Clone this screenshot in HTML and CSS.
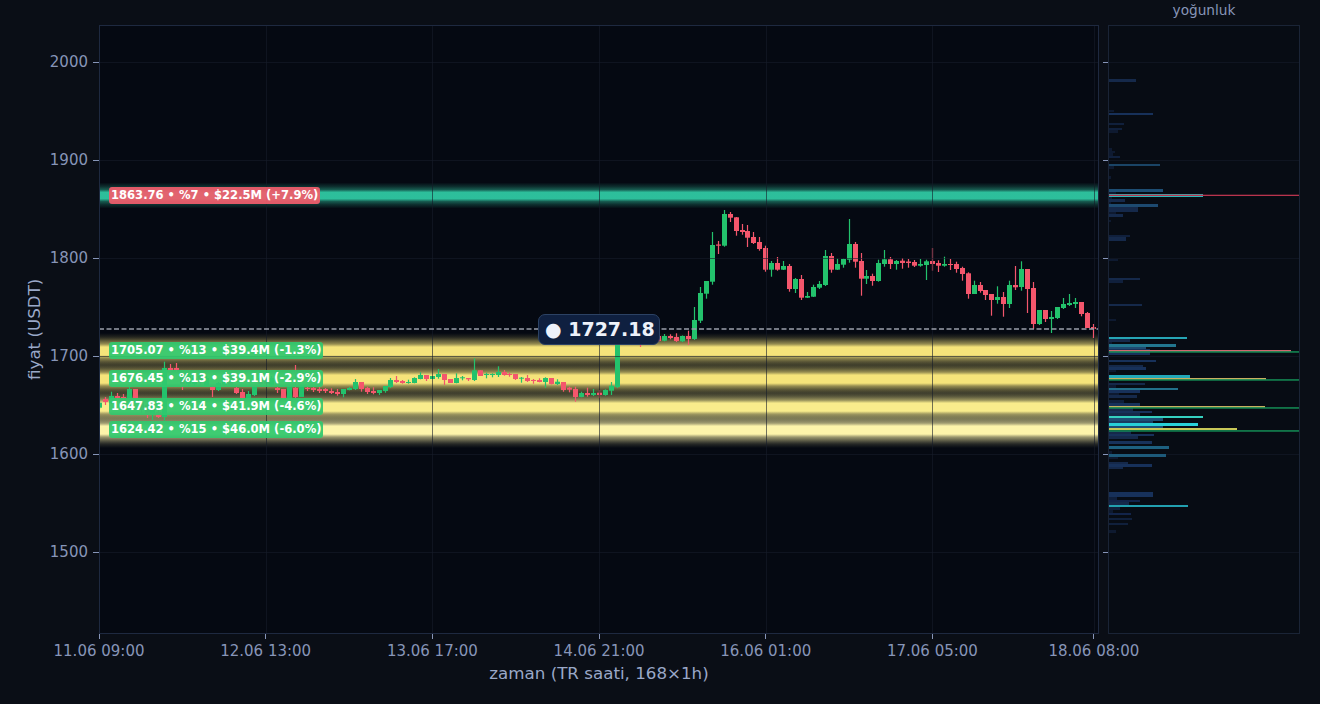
FILE: index.html
```html
<!DOCTYPE html>
<html>
<head>
    <title>Fiyat ve yoğunluk</title>
    <link rel="stylesheet" href="styles.css">
</head>
<body>
    <div class="page">
        <div class="hist-title">yoğunluk</div>

        <div class="y-axis">
            <div class="y-title">fiyat (USDT)</div>
            <div class="y-ticks">
                <div class="y-tick"><span>2000</span><i></i></div>
                <div class="y-tick"><span>1900</span><i></i></div>
                <div class="y-tick"><span>1800</span><i></i></div>
                <div class="y-tick"><span>1700</span><i></i></div>
                <div class="y-tick"><span>1600</span><i></i></div>
                <div class="y-tick"><span>1500</span><i></i></div>
            </div>
        </div>

        <div class="plot" id="plot">
            <svg id="plotSvg" viewBox="99 25 1000 609" width="1000" height="609"></svg>
            <div class="price-tag">● 1727.18</div>
        </div>

        <div class="y-ticks hist-ticks">
            <div class="y-tick"><i></i></div>
            <div class="y-tick"><i></i></div>
            <div class="y-tick"><i></i></div>
            <div class="y-tick"><i></i></div>
            <div class="y-tick"><i></i></div>
            <div class="y-tick"><i></i></div>
        </div>

        <div class="hist">
            <svg id="histSvg" viewBox="1108 25 192 609" width="192" height="609"></svg>
        </div>

        <div class="x-axis">
            <div class="x-ticks">
                <div class="x-tick"><i></i><span>11.06 09:00</span></div>
                <div class="x-tick"><i></i><span>12.06 13:00</span></div>
                <div class="x-tick"><i></i><span>13.06 17:00</span></div>
                <div class="x-tick"><i></i><span>14.06 21:00</span></div>
                <div class="x-tick"><i></i><span>16.06 01:00</span></div>
                <div class="x-tick"><i></i><span>17.06 05:00</span></div>
                <div class="x-tick x-tick-last"><i></i><span>18.06 08:00</span></div>
            </div>
            <div class="x-title">zaman (TR saati, 168×1h)</div>
        </div>
    </div>

    <script src="chart.js"></script>
</body>
</html>
```

FILE: styles.css
```css
html, body {
    margin: 0;
    padding: 0;
    background-color: #0a0e16;
}

body {
    font-family: "DejaVu Sans", sans-serif;
    color: #8795b8;
    overflow: hidden;
}

.page {
    display: grid;
    grid-template-columns: 99px 1000px 9px 192px;
    grid-template-rows: 25px 609px 70px;
    width: 1320px;
    height: 704px;
}

.hist-title {
    grid-column: 4;
    grid-row: 1;
    font-size: 13.7px;
    line-height: 20px;
    text-align: center;
    color: #8795b8;
}

.y-axis {
    grid-column: 1;
    grid-row: 2;
    display: flex;
}

.y-title {
    writing-mode: vertical-rl;
    transform: rotate(180deg);
    width: 20px;
    margin-left: 24px;
    text-align: center;
    font-size: 16.7px;
    line-height: 20px;
    color: #9aa8c8;
}

.y-ticks {
    flex: 1;
    padding-top: 27px;
}

.y-tick {
    display: flex;
    justify-content: flex-end;
    height: 98px;
    font-size: 15px;
    line-height: 20px;
}

.y-tick span {
    margin-right: 5px;
}

.y-tick i {
    width: 6px;
    height: 1px;
    margin-top: 10px;
    background-color: #8795b8;
}

.hist-ticks {
    grid-column: 3;
    grid-row: 2;
}

.hist-ticks .y-tick i {
    width: 5px;
}

.plot {
    grid-column: 2;
    grid-row: 2;
    position: relative;
    background-color: #050912;
    outline: 1px solid #1e2940;
    outline-offset: -1px;
}

.plot svg,
.hist svg {
    display: block;
}

.hist {
    grid-column: 4;
    grid-row: 2;
    background-color: #070c14;
    outline: 1px solid #1a2436;
    outline-offset: -1px;
}

.level-badge {
    position: absolute;
    left: 10px;
    height: 17px;
    padding: 0 2px;
    border-radius: 3px;
    font-size: 11.55px;
    font-weight: bold;
    line-height: 17px;
    white-space: nowrap;
    color: #ffffff;
}

.badge-sell {
    background-color: rgba(240, 92, 108, 0.93);
}

.badge-buy {
    background-color: rgba(48, 200, 110, 0.93);
}

.price-tag {
    position: absolute;
    left: 439px;
    top: 289px;
    box-sizing: border-box;
    height: 31px;
    width: 122px;
    padding-left: 6px;
    border: 1px solid #2c4264;
    border-radius: 7px;
    background-color: #0f2040;
    font-size: 19px;
    font-weight: bold;
    line-height: 28px;
    white-space: nowrap;
    color: #eef2fa;
}

.x-axis {
    grid-column: 2;
    grid-row: 3;
}

.x-ticks {
    display: flex;
    gap: 166.7px;
    height: 28px;
}

.x-tick {
    display: flex;
    flex-direction: column;
    align-items: center;
    width: 0;
    font-size: 15px;
    line-height: 20px;
}

.x-tick i {
    flex: none;
    width: 1px;
    height: 5px;
    margin-bottom: 2px;
    background-color: #8795b8;
}

.x-tick span {
    white-space: nowrap;
}

.x-tick-last {
    margin-left: -5.2px;
}

.x-title {
    margin-top: 1px;
    font-size: 16.7px;
    line-height: 20px;
    text-align: center;
    color: #9aa8c8;
}
```

FILE: chart.js
```js
var NS = "http://www.w3.org/2000/svg";
var PLOT_LEFT = 99, PLOT_RIGHT = 1099, PLOT_TOP = 25, PLOT_BOTTOM = 634;
var HIST_LEFT = 1108, HIST_RIGHT = 1300;
var STEP = 5.95;
var GREEN = "#23c26c", RED = "#f4566c";

// color, body top, body bottom, wick top, wick bottom (all in page pixels)
var candles = [
    "g 402.7 407.7 400 409", "r 399 402 397 405", "g 396 403 391.7 404", "r 396 398 393 400",
    "r 397 398 394 400", "g 389 398 386.7 400", "r 389 398 389 398", "r 402 410 400 413",
    "r 405 415 403 418", "g 405 414 403 420", "r 412 417 410 418", "g 368 417 361.7 420.7",
    "r 368 371 364 374", "r 368 370 363 372", "r 378 384 376 390", "g 376 384 373 386",
    "g 378 384 376 386", "r 376 382 374 385", "g 378 386 376 387", "r 387 390 385 397",
    "g 383 390 382 391", "g 378 385 376 386", "r 378 385 376 386", "r 388 393 387 394",
    "r 392 398 389 400", "g 394 398 391 399", "g 387 395 386 396", "r 378 384 376 386",
    "r 378 384 376 386", "g 378 385 376 386", "r 388 390 387 393", "r 389 398 389 399",
    "g 387 398 386 398", "r 388 397 365 398", "g 386 397 385 397", "r 388 389 387 391",
    "r 388 390 387 392", "r 389 391 387 393", "r 389 391 388 393", "r 391 393 388.3 394",
    "r 392 394 389 395.7", "g 389 394 389 397.3", "g 388 390 387 390.3", "g 382 389 379 390",
    "r 382 389 382 391.7", "r 388 392 386.7 394", "r 391 393 387.3 394.3", "g 390 393 390 395",
    "g 386 391 386 392.7", "g 380 387 378 388", "r 380 382 376 383", "r 381 383 380 383.7",
    "g 382 383 379.7 383.7", "g 378 383 377.3 383.3", "g 375 379 372.3 379.3", "r 375 379 375 381",
    "g 376 379 376 379", "g 374 377 369 378.7", "r 374 380 374 385", "r 379 383 379 383",
    "g 378 383 373.3 383.3", "g 377.3 378.3 376 380.3", "r 378 379.3 378 381", "g 370.3 380 358.3 381",
    "r 370.3 376 370.3 376", "g 374 375 372.7 378.3", "g 374 375 373.3 377.3", "g 372 375 366.3 377",
    "r 372 375 370 375.7", "r 374 375 372.7 376.7", "r 374 379 374 380", "g 377.7 378.3 377 382.7",
    "r 378 381 375 382", "r 380 380.6 379 383.7", "r 380 382 378.3 382.3", "g 378 382 377.3 387.7",
    "r 378 384 378 384.5", "g 381.7 384 379.3 385", "r 382 390 382 391.7", "r 387.7 389.7 386.7 392.3",
    "r 389 397 386.7 401.7", "g 393 397 391.7 397.3", "r 393 395 387.7 396.7", "g 393 395 389 396",
    "r 392.7 395 390 398", "g 390 395 389.3 395.7", "g 385.7 390.7 382 395", "g 335 387 332 388",
    "r 335 339 333 341", "g 334 338 332 340", "r 335 338 332 341", "r 336 339 333 347",
    "g 335 338 333 340", "r 335 338 333 341", "r 336 341 334 342", "g 336 340.7 334 341.3",
    "r 336 338 334.3 339.3", "r 337 341 333.3 342", "g 336 341.3 335.5 342", "r 336 339 330.7 345",
    "g 320 339 307 340", "g 293 320.7 287 323", "g 281 293.7 281 298.7", "g 245 281.7 232 284.7",
    "r 244.5 245.7 241 254", "g 214 245.7 210 246.7", "r 214 217.7 212 222", "r 217.3 231 217 235.7",
    "r 230 232 224 234.7", "r 231 237.7 225 247", "r 237 243 232 244", "r 242 249 237 250.7",
    "r 248 269.7 245.7 271.7", "g 263 269.7 261 276.7", "r 263 269.7 257 270.7", "g 266 269.7 261 270",
    "r 266 289 264 291.7", "g 279 289 278 293", "r 279 297.7 275 300", "g 296 297.7 292 298",
    "g 287 296.7 284.7 297", "g 284 287.7 281 289", "g 256 285 250 286", "r 256 269.7 253 272.7",
    "g 264 269.7 258.7 270", "g 259 264.7 258.7 267.7", "g 244 259.7 219 262.7", "r 244 261.7 242 267.7",
    "r 261 278.7 253 295.7", "g 276 278.7 270 284", "r 276 281 273.7 285.7", "g 263 281 259.7 281.7",
    "g 259.3 264 250 266.7", "r 259.3 264 257 269", "g 261 264 260 269.7", "r 260.7 263 258 268.7",
    "r 261.5 263 259 267.7", "r 262 265.7 260 267", "g 264 265.7 259 266.7", "g 261.3 265 259.7 280",
    "r 261 264 248 270.7", "r 263 265.7 260.3 272", "g 264 265.7 256.7 266.7", "r 264 264.8 259 270",
    "r 264 269 261.7 272.7", "r 268 274 266.7 280.7", "r 273.3 294 272.3 298.7", "g 285 294 280.7 294",
    "r 285 291 282 292.7", "r 290 295 290 300", "r 294 300 294 315.7", "g 297 300 286.3 303.7",
    "r 297 304 292 316.7", "g 285 304 280.7 308", "r 285 287.3 266 290", "g 269 287 261.3 290.7",
    "r 269 289 269 313", "r 288 324 282 329", "g 310 324 310 325", "r 310 319 310 322",
    "g 317 319 311 333", "g 307 318 307 319", "g 304 308 298 309", "g 303 305 294 306",
    "g 302 304 298 308", "r 302 314 302 316.3", "r 313 328 312 328", "r 327 329 324 338"
];

// y top, y bottom, width, color
var histBars = [
    [79, 82, 27, "#15294a"], [110, 112, 5, "#0e1a30"], [113, 115, 44, "#17315a"], [123, 125, 15, "#10203c"],
    [128, 130, 13, "#10203c"], [130, 133, 9, "#0e1a30"], [148, 151, 3, "#0e1a30"], [151, 153, 6, "#0e1a30"],
    [153, 156, 4, "#0e1a30"], [156, 158, 11, "#10203c"], [164, 166, 51, "#1a4466"], [166, 169, 5, "#0e1a30"],
    [176, 179, 2, "#0e1a30"], [189, 192, 54, "#1d4e74"], [192, 194, 7, "#0e1a30"], [194, 197, 94, "#2bb8b8"],
    [197, 199, 3, "#0e1a30"], [199, 202, 16, "#15294a"], [202, 204, 2, "#0e1a30"], [204, 207, 49, "#1d4a70"],
    [207, 212, 29, "#15294a"], [212, 214, 7, "#0e1a30"], [214, 217, 14, "#15294a"], [220, 222, 2, "#0e1a30"],
    [235, 237, 21, "#10203c"], [237, 241, 17, "#15294a"], [259, 261, 9, "#0e1a30"], [278, 280, 31, "#15294a"],
    [280, 283, 14, "#10203c"], [304, 306, 33, "#15294a"], [319, 321, 7, "#0e1a30"],
    [337, 339, 78, "#26a5b5"], [339, 342, 21, "#15294a"], [342, 344, 3, "#0e1a30"], [344, 347, 67, "#22778f"],
    [347, 349, 37, "#1e4a70"], [349, 350, 41, "#17315a"], [350, 351.5, 182, "#d06a70"], [352, 355, 41, "#17315a"],
    [360, 362, 47, "#17315a"], [365, 367, 34, "#15294a"], [367, 370, 37, "#17315a"], [370, 372, 7, "#0e1a30"],
    [375, 378, 81, "#22a8b8"], [378, 379.5, 157, "#c8b060"], [383, 385, 36, "#15294a"], [385, 388, 7, "#0e1a30"],
    [388, 390, 69, "#22708a"], [390, 393, 31, "#17315a"], [393, 395, 10, "#0e1a30"], [395, 398, 28, "#15294a"],
    [400, 403, 15, "#10203c"], [403, 406, 31, "#17315a"], [406, 407.5, 156, "#c8b060"], [408, 411, 24, "#15294a"],
    [411, 413, 43, "#17315a"], [413, 416, 31, "#15294a"], [416, 418, 94, "#35d0c0"], [418, 421, 54, "#1d4e74"],
    [421, 423, 44, "#1a3c60"], [423, 426, 89, "#28d0d8"], [426, 428, 54, "#1d4e74"], [428, 430, 128, "#c8c858"],
    [431, 434, 22, "#15294a"], [434, 436, 45, "#17315a"], [436, 439, 29, "#15294a"], [441, 444, 43, "#17315a"],
    [446, 449, 60, "#1d6080"], [451, 454, 3, "#0e1a30"], [454, 457, 57, "#1d5a7a"], [457, 459, 9, "#0e1a30"],
    [462, 464, 19, "#15294a"], [464, 467, 43, "#17315a"], [467, 469, 14, "#15294a"],
    [492, 497, 44, "#17315a"], [497, 500, 8, "#10203c"], [500, 502, 31, "#12244a"], [502, 505, 20, "#15294a"],
    [505, 507, 79, "#22a0b0"], [507, 510, 11, "#10203c"], [510, 513, 4, "#0e1a30"], [513, 515, 22, "#12244a"],
    [518, 520, 23, "#10203c"], [523, 525, 19, "#10203c"], [530, 533, 7, "#0e1a30"]
];

// price, glow color, badge text, badge class, histogram line color, histogram line y
var levels = [
    [1863.76, "#2fc8a2", "1863.76 • %7 • $22.5M (+7.9%)", "badge-sell", "#b8344e", 194.7],
    [1705.07, "#f6e47a", "1705.07 • %13 • $39.4M (-1.3%)", "badge-buy", "#16a05f", 351.3],
    [1676.45, "#f6e47a", "1676.45 • %13 • $39.1M (-2.9%)", "badge-buy", "#16a05f", 379.3],
    [1647.83, "#f9ec8c", "1647.83 • %14 • $41.9M (-4.6%)", "badge-buy", "#16a05f", 407.3],
    [1624.42, "#fdf4aa", "1624.42 • %15 • $46.0M (-6.0%)", "badge-buy", "#16a05f", 430.3]
];

// offset from the band center, opacity
var yellowGlow = [[-18, 0], [-16, 0.06], [-14, 0.13], [-12, 0.25], [-7, 0.6], [-4, 1], [4, 1], [7, 0.6], [12, 0.25], [14, 0.13], [16, 0.06], [18, 0]];
var tealGlow = [[-13, 0], [-9, 0.2], [-6, 0.42], [-3.2, 0.95], [3.2, 0.95], [6, 0.42], [9, 0.2], [13, 0]];

function priceY(price) {
    return 62 + (2000 - price) * 0.98;
}

function add(parent, tag, attrs) {
    var el = document.createElementNS(NS, tag);
    for (var key in attrs) {
        el.setAttribute(key, attrs[key]);
    }
    parent.appendChild(el);
    return el;
}

function drawBands(svg) {
    var defs = add(svg, "defs", {});
    levels.forEach(function (level, n) {
        var center = priceY(level[0]);
        var glow = n === 0 ? tealGlow : yellowGlow;
        var reach = -glow[0][0];
        var grad = add(defs, "linearGradient", {
            id: "band" + n, gradientUnits: "userSpaceOnUse",
            x1: 0, x2: 0, y1: center - reach, y2: center + reach
        });
        glow.forEach(function (stop) {
            add(grad, "stop", {
                offset: (stop[0] + reach) / (2 * reach), "stop-color": level[1], "stop-opacity": stop[1]
            });
        });
        add(svg, "rect", {
            x: PLOT_LEFT, y: center - reach, width: PLOT_RIGHT - PLOT_LEFT, height: 2 * reach,
            fill: "url(#band" + n + ")"
        });
    });
}

function drawCandles(svg) {
    candles.forEach(function (row, i) {
        var c = row.split(" ");
        var left = Math.round(PLOT_LEFT + STEP * i - 2.1);
        var color = c[0] === "g" ? GREEN : RED;
        add(svg, "rect", { x: left + 1.9, y: c[3], width: 1.2, height: c[4] - c[3], fill: color });
        add(svg, "rect", { x: left, y: c[1], width: 5, height: Math.max(c[2] - c[1], 1), fill: color });
    });
}

function drawGrid(svg, left, right, verticals) {
    [62, 160, 258, 356, 454, 552].forEach(function (y) {
        add(svg, "line", { x1: left, x2: right, y1: y + 0.5, y2: y + 0.5, stroke: "#161c2a", "stroke-opacity": 0.6 });
    });
    verticals.forEach(function (x) {
        add(svg, "line", { x1: x + 0.5, x2: x + 0.5, y1: PLOT_TOP, y2: PLOT_BOTTOM, stroke: "#161c2a", "stroke-opacity": 0.6 });
    });
}

function drawBadges(plot) {
    levels.forEach(function (level) {
        var badge = document.createElement("div");
        badge.className = "level-badge " + level[3];
        badge.style.top = (priceY(level[0]) - 34) + "px";
        badge.textContent = level[2];
        plot.insertBefore(badge, plot.lastElementChild);
    });
}

function drawHist(svg) {
    drawGrid(svg, HIST_LEFT, HIST_RIGHT, []);
    histBars.forEach(function (bar) {
        add(svg, "rect", { x: HIST_LEFT + 1, y: bar[0], width: bar[2], height: bar[1] - bar[0], fill: bar[3] });
    });
    levels.forEach(function (level) {
        add(svg, "rect", { x: HIST_LEFT + 1, y: level[5], width: HIST_RIGHT - HIST_LEFT - 1, height: 1.3, fill: level[4] });
    });
}

var plotSvg = document.getElementById("plotSvg");
drawBands(plotSvg);
drawCandles(plotSvg);
drawGrid(plotSvg, PLOT_LEFT, PLOT_RIGHT, [266, 432, 599, 766, 932, 1094]);
add(plotSvg, "line", {
    x1: PLOT_LEFT, x2: PLOT_RIGHT, y1: 329, y2: 329,
    stroke: "#9a9faa", "stroke-width": 1.4, "stroke-dasharray": "5 2.5"
});
drawBadges(document.getElementById("plot"));
drawHist(document.getElementById("histSvg"));
```
